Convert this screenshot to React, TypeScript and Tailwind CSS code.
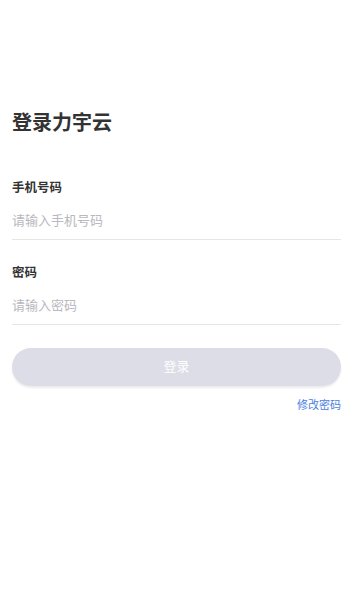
import React, { useState } from "react";

const font = {
  fontFamily: '"Noto Sans", "Noto Sans CJK SC", sans-serif',
};

export default function App() {
  const [phone, setPhone] = useState("");
  const [password, setPassword] = useState("");

  return (
    <div className="min-h-[602px] w-full bg-white px-3 pt-[109px]" style={font}>
      <h1 className="text-[20px] leading-[28px] font-bold text-[#333333]">登录力宇云</h1>

      <div className="mt-[42px]">
        <label className="block text-[12.5px] leading-[18px] font-bold text-[#333333]">手机号码</label>
        <input
          value={phone}
          onChange={(e) => setPhone(e.target.value)}
          placeholder="请输入手机号码"
          className="mt-[3px] block h-10 w-full border-b border-[#e6e6e6] bg-transparent text-[13px] text-[#333] outline-none placeholder:text-[#b8b8be]"
        />
      </div>

      <div className="mt-[24px]">
        <label className="block text-[12.5px] leading-[18px] font-bold text-[#333333]">密码</label>
        <input
          type="password"
          value={password}
          onChange={(e) => setPassword(e.target.value)}
          placeholder="请输入密码"
          className="mt-[3px] block h-10 w-full border-b border-[#e6e6e6] bg-transparent text-[13px] text-[#333] outline-none placeholder:text-[#b8b8be]"
        />
      </div>

      <button className="mt-[23px] flex h-[38px] w-full items-center justify-center rounded-full bg-[#dcdde6] text-[13px] text-white shadow-[0_2px_2px_rgba(0,0,0,0.08)]">
        登录
      </button>

      <div className="mt-[11px] flex justify-end">
        <button className="text-[11px] leading-4 text-[#4a80e0]">修改密码</button>
      </div>
    </div>
  );
}
